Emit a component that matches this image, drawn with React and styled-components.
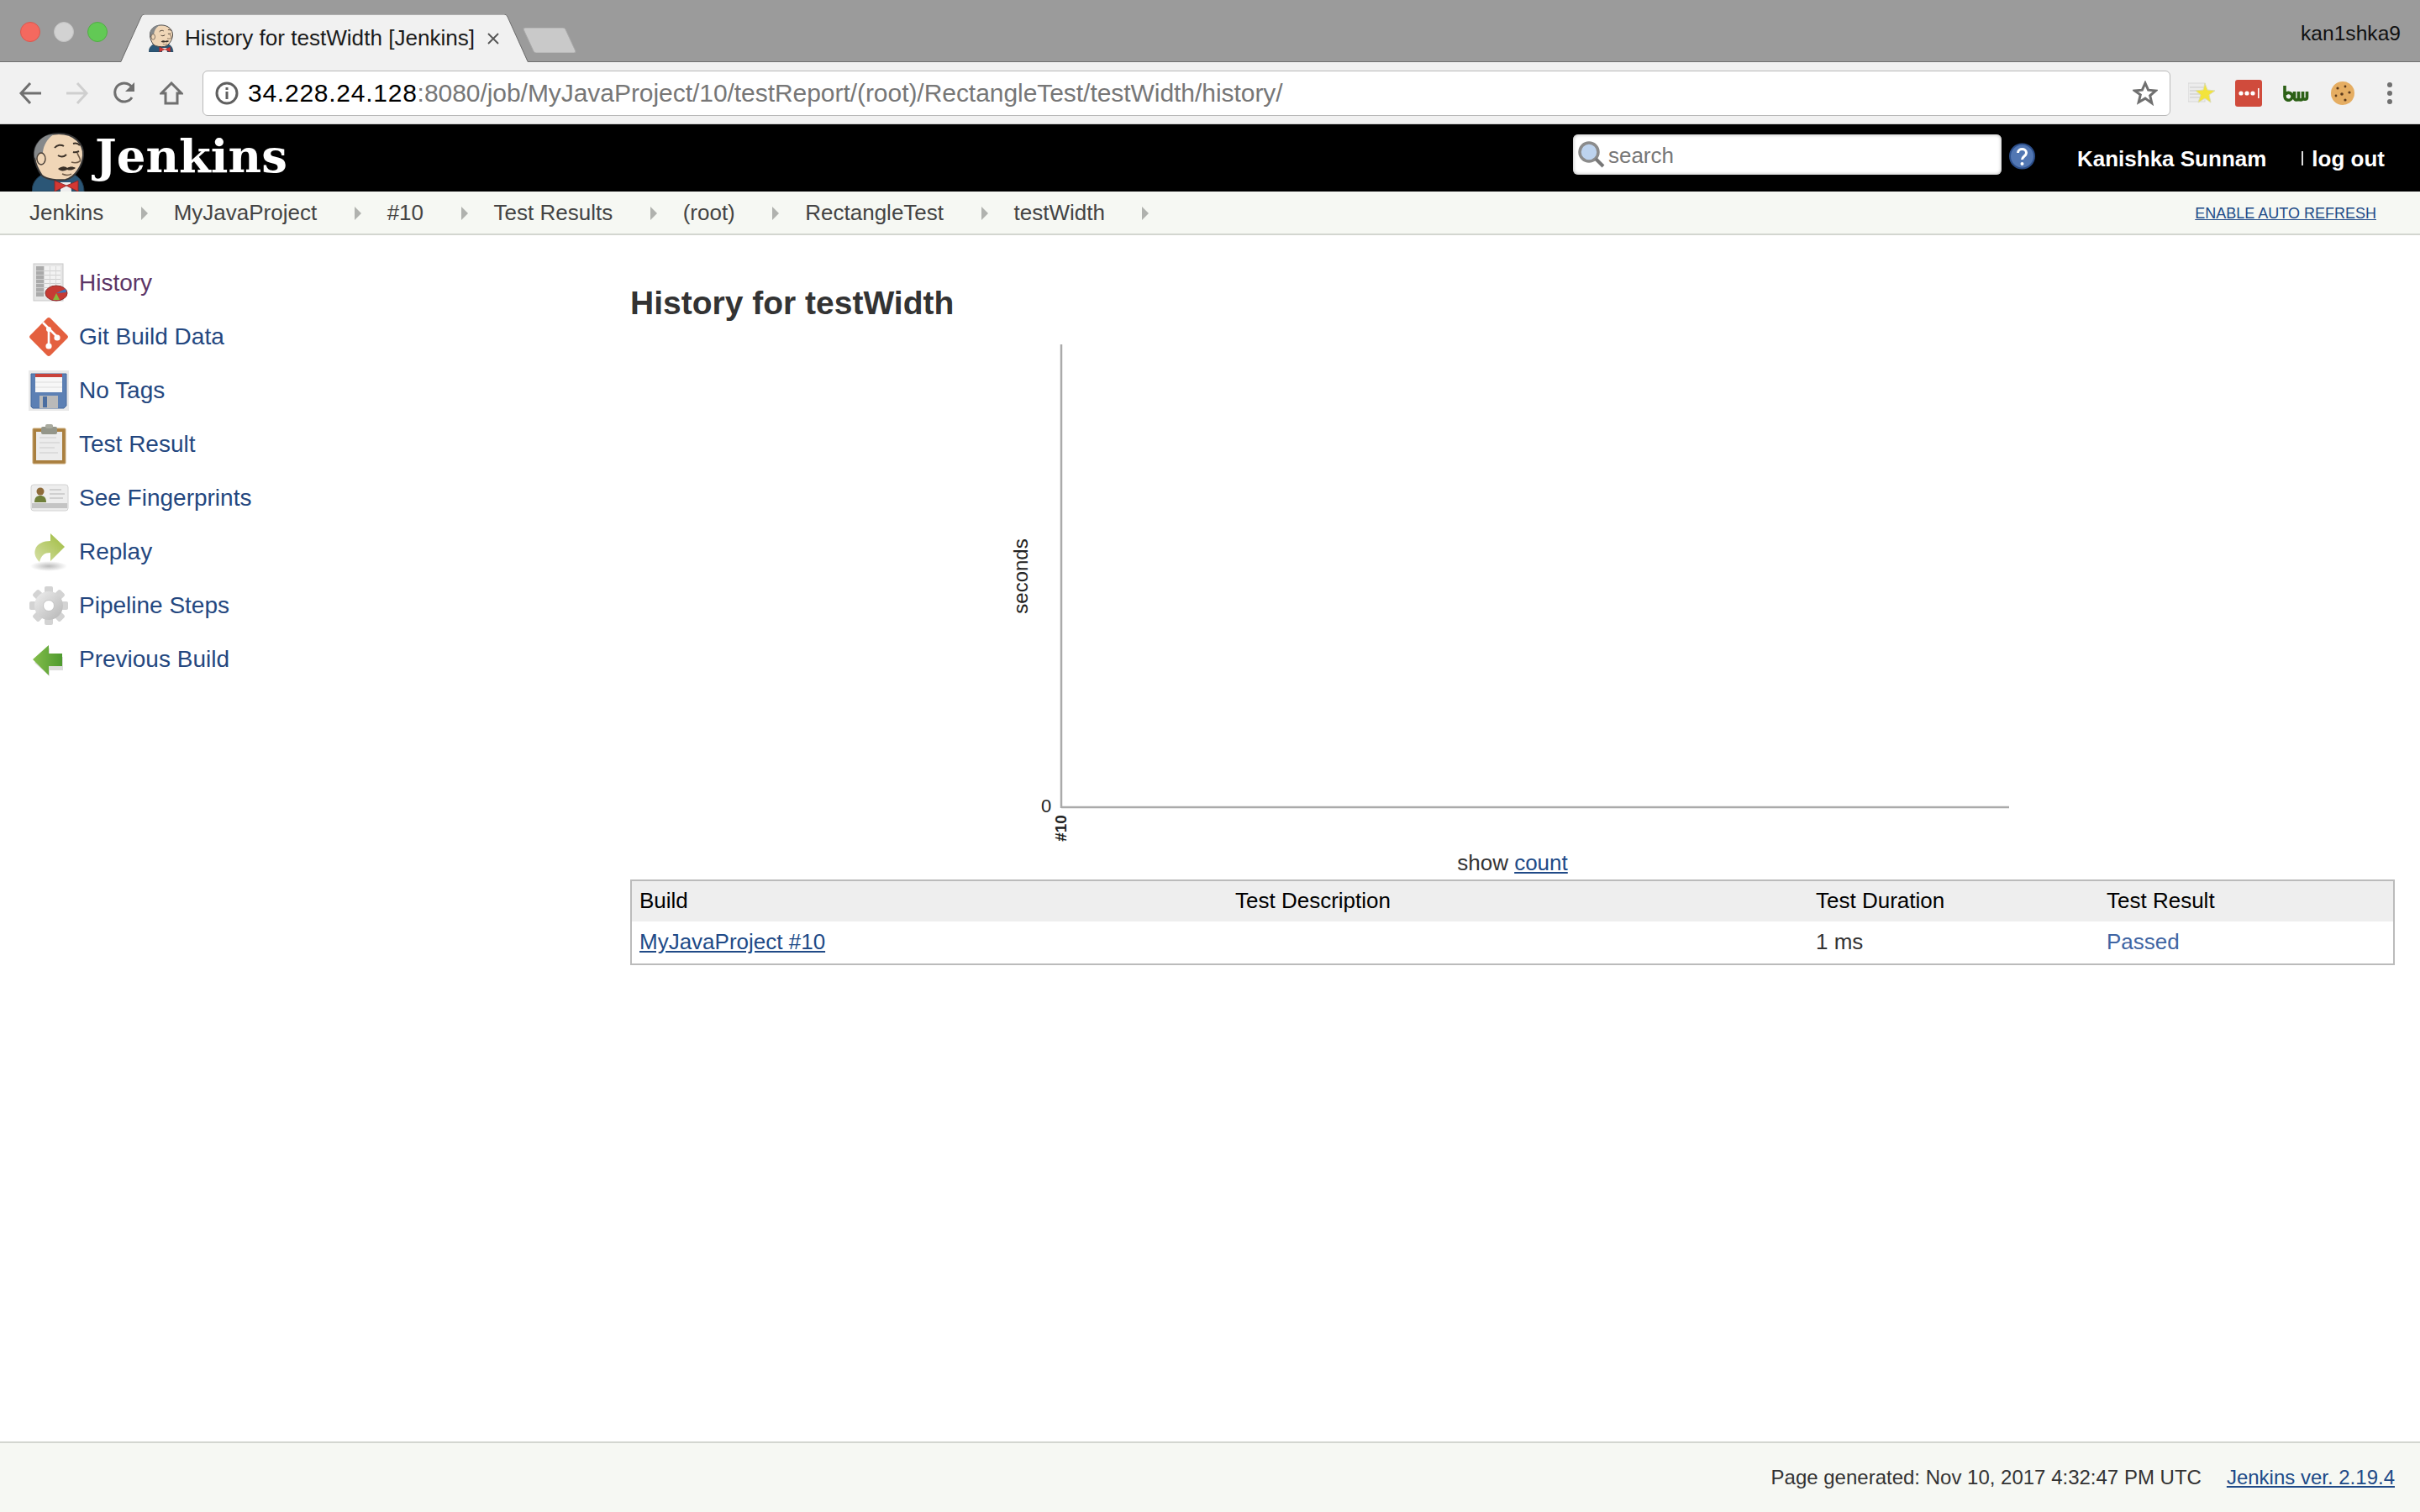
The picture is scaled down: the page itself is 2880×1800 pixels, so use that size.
import styled, { createGlobalStyle } from "styled-components";

const GlobalStyle = createGlobalStyle`
  html, body {
    margin: 0;
    padding: 0;
    background: #fff;
    font-family: "Liberation Sans", Arial, sans-serif;
  }
`;

const Page = styled.div`
  display: flex;
  flex-direction: column;
  min-height: 100vh;
`;

/* browser chrome */
const TabStrip = styled.div`
  display: flex;
  align-items: flex-end;
  height: 73px;
  padding: 0 23px 0 24px;
  background: #9b9b9b;
  border-bottom: 1px solid #6e6e6e;
`;

const Lights = styled.div`
  display: flex;
  gap: 16px;
  align-self: flex-start;
  margin-top: 26px;
  margin-right: 16px;
`;

const Light = styled.span`
  width: 24px;
  height: 24px;
  border-radius: 50%;
  box-sizing: border-box;
  background: ${(p) => p.$color};
  border: 1px solid ${(p) => p.$edge};
`;

const Tab = styled.div`
  position: relative;
  display: flex;
  align-items: center;
  width: 484px;
  height: 57px;
  margin-bottom: -1px;
  padding-left: 33px;
  box-sizing: border-box;
  font-size: 26.1px;
  color: #1a1a1a;
`;

const TabShape = styled.svg`
  position: absolute;
  left: 0;
  top: 0;
`;

const TabFavicon = styled.span`
  position: relative;
  display: flex;
  margin-right: 13px;
`;

const TabTitle = styled.span`
  position: relative;
  white-space: nowrap;
`;

const TabClose = styled.svg`
  position: relative;
  margin-left: 15px;
`;

const NewTab = styled.svg`
  margin: 0 0 10px -6px;
`;

const Profile = styled.span`
  margin-left: auto;
  align-self: flex-start;
  margin-top: 26px;
  font-size: 24.6px;
  line-height: 28px;
  color: #111;
`;

const Toolbar = styled.div`
  display: flex;
  align-items: center;
  height: 73px;
  padding-left: 22px;
  background: #f1f1f1;
  border-bottom: 1px solid #cfcfcf;
`;

const NavIcons = styled.div`
  display: flex;
  gap: 28px;
  margin-right: 23px;
`;

const Omnibox = styled.div`
  flex: 1;
  display: flex;
  align-items: center;
  height: 54px;
  padding: 0 14px;
  box-sizing: border-box;
  background: #fff;
  border: 1px solid #b9b9b9;
  border-radius: 6px;
`;

const Url = styled.span`
  margin-left: 11px;
  font-size: 30px;
  letter-spacing: -0.05px;
  white-space: nowrap;
  color: #777;
  b {
    font-weight: 400;
    letter-spacing: 0.75px;
    color: #000;
  }
`;

const Star = styled.svg`
  margin-left: auto;
`;

const Extensions = styled.div`
  display: flex;
  align-items: center;
  gap: 24px;
  width: 297px;
  padding-left: 21px;
  box-sizing: border-box;
`;

const MenuDots = styled.svg`
  margin-left: 14px;
`;

/* jenkins header */
const Header = styled.header`
  display: flex;
  align-items: center;
  height: 80px;
  padding: 0 42px 0 38px;
  background: #000;
  color: #fff;
`;

const Logo = styled.div`
  display: flex;
  align-self: flex-end;
`;

const Brand = styled.div`
  margin-left: 11px;
  margin-top: -4px;
  font-family: "DejaVu Serif", "Liberation Serif", serif;
  font-weight: 700;
  font-size: 54.5px;
`;

const SearchBox = styled.div`
  display: flex;
  align-items: center;
  width: 510px;
  height: 48px;
  margin-left: auto;
  margin-bottom: 8px;
  padding-left: 5px;
  box-sizing: border-box;
  background: #fff;
  border-radius: 6px;
  box-shadow: inset 0 0 4px #aaa;
  font-size: 26px;
  color: #777;
`;

const SearchLabel = styled.span`
  margin: 2px 0 0 4px;
`;

const Help = styled.svg`
  margin-left: 9px;
  margin-bottom: 4px;
`;

const UserLink = styled.a`
  margin-left: 50px;
  padding-top: 2px;
  font-weight: 700;
  font-size: 26px;
  white-space: nowrap;
`;

const LogOut = styled.a`
  padding-top: 2px;
  font-weight: 700;
  font-size: 26px;
  white-space: nowrap;
`;

const Divider = styled.span`
  width: 2px;
  height: 17px;
  margin-left: 42px;
  margin-right: 10px;
  background: #ddd;
`;

/* breadcrumbs */
const Breadcrumbs = styled.nav`
  display: flex;
  align-items: center;
  height: 50px;
  padding: 0 52px 0 35px;
  background: #f6f8f3;
  border-bottom: 2px solid #d3d6d0;
  font-size: 26px;
  color: #444;
`;

const Crumb = styled.span`
  display: flex;
  align-items: center;
  white-space: nowrap;
  &::after {
    content: "";
    margin: 2px 31px 0 44.5px;
    border-left: 8px solid #b0b2ae;
    border-top: 8px solid transparent;
    border-bottom: 8px solid transparent;
  }
`;

const AutoRefresh = styled.a`
  margin-left: auto;
  padding-top: 2px;
  font-size: 18px;
  color: #204a87;
  text-decoration: underline;
`;

/* page body */
const Content = styled.div`
  flex: 1;
  display: flex;
`;

const Sidebar = styled.aside`
  width: 750px;
  flex: none;
  padding: 25px 0 0 34px;
  box-sizing: border-box;
`;

const Task = styled.a`
  display: flex;
  align-items: center;
  gap: 12px;
  height: 64px;
  font-size: 28px;
  color: ${(p) => (p.$visited ? "#5c3566" : "#24477f")};
`;

const TaskIcon = styled.svg`
  flex: none;
`;

const Main = styled.main`
  flex: 1;
  padding: 61px 30px 0 0;
  min-width: 0;
`;

const Title = styled.h1`
  margin: 0 0 19px;
  font-size: 39px;
  line-height: 40px;
  color: #333;
`;

const Chart = styled.div`
  display: flex;
  justify-content: center;
`;

const ChartText = styled.text`
  font-family: "Liberation Sans", Arial, sans-serif;
  font-size: ${(p) => p.$size}px;
  font-weight: ${(p) => p.$weight || 400};
  fill: #222;
`;

const ShowCount = styled.div`
  height: 30px;
  margin-bottom: 5px;
  font-size: 26px;
  line-height: 30px;
  text-align: center;
  color: #333;
  a {
    color: #204a87;
    text-decoration: underline;
  }
`;

const Table = styled.table`
  width: 100%;
  table-layout: fixed;
  border-collapse: separate;
  border-spacing: 0;
  border: 2px solid #bbb;
  font-size: 26px;
`;

const Th = styled.th`
  width: ${(p) => (p.$w ? `${p.$w}px` : "auto")};
  height: 48px;
  padding: 0 9px 2px;
  box-sizing: border-box;
  background: #eee;
  font-weight: 400;
  text-align: left;
  color: #000;
`;

const Td = styled.td`
  height: 50px;
  padding: 0 9px 2px;
  box-sizing: border-box;
  color: #333;
  a {
    color: #204a87;
    text-decoration: underline;
  }
`;

const Passed = styled.span`
  color: #3f65a3;
`;

const Footer = styled.footer`
  display: flex;
  justify-content: flex-end;
  align-items: center;
  gap: 30px;
  height: 82px;
  padding-right: 30px;
  background: #f6f8f3;
  border-top: 2px solid #d3d6d0;
  font-size: 24px;
  color: #333;
  a {
    color: #204a87;
    text-decoration: underline;
  }
`;

function Butler({ width, height }) {
  return (
    <svg width={width} height={height} viewBox="0 0 64 71">
      <path d="M0 71c0-11 6-18 16-22h30c10 3 16 11 16 22z" fill="#2b5676" stroke="#1d3548" />
      <path d="M34 60h12l1 11H34z" fill="#eee" />
      <path d="M12 52C6 44 4 37 3 30 1 14 14 2 32 2c18 0 30 12 29 26-1 12-9 26-21 29-9 1-22 0-28-5z" fill="#f0d6b7" stroke="#39393a" strokeWidth="2" />
      <path d="M3 30C1 14 14 2 26 3c-8 5-12 13-13 21l-1 10c-4 2-7 0-9-4z" fill="#85888a" />
      <ellipse cx="11" cy="32" rx="5" ry="7" fill="#f0d6b7" stroke="#4a4038" strokeWidth="1.4" />
      <path d="M27 19c3-4 8-4 11-2M49 14c3-1 6 0 8 2" fill="none" stroke="#3a3027" strokeWidth="2" />
      <path d="M31 28c3 2 7 2 10-1M49 24c3 1 5 0 7-1" fill="none" stroke="#3a3027" strokeWidth="2" />
      <path d="M54 25c1 4 5 8 3 10-3 2-7 2-10 1" fill="none" stroke="#6e5a47" strokeWidth="1.6" />
      <path d="M31 44c5-4 9-3 11-1 3-2 7-2 10 0-4 3-7 3-10 2-4 2-8 2-11-1z" fill="#3a3027" />
      <path d="M36 50c4 2 8 2 11 0" fill="none" stroke="#6e5a47" strokeWidth="1.4" />
      <path d="M41 64L27 58v13zM41 64l14-6v13z" fill="#d33833" stroke="#8f201d" strokeWidth="0.8" />
    </svg>
  );
}

function HistoryIcon() {
  return (
    <TaskIcon width="48" height="48" viewBox="0 0 48 48">
      <rect x="6" y="1" width="35" height="44" fill="#e6e6e6" stroke="#c9c9c9" />
      <rect x="9" y="4" width="9" height="36" fill="#aaa" />
      <rect x="18" y="4" width="20" height="36" fill="#f2f2f2" />
      {[9, 14, 19, 24, 29, 34].map((y) => (
        <rect key={y} x="9" y={y} width="29" height="1" fill="#cfcfcf" />
      ))}
      {[18, 25, 32].map((x) => (
        <rect key={x} x={x} y="4" width="1" height="36" fill="#d8d8d8" />
      ))}
      <ellipse cx="33" cy="36" rx="13" ry="9" fill="#c63a34" stroke="#8d2a27" />
      <path d="M33 36l-4 8h8z" fill="#8bb63c" />
      <path d="M33 36l12-1-1-4z" fill="#3a78bd" />
    </TaskIcon>
  );
}

function GitIcon() {
  return (
    <TaskIcon width="48" height="48" viewBox="0 0 48 48">
      <rect x="7" y="7" width="34" height="34" rx="3" fill="#e4603f" transform="rotate(45 24 24)" />
      <path d="M17 7l16 16M24 15v21" stroke="#fff" strokeWidth="2.6" fill="none" />
      <circle cx="24" cy="35" r="3.6" fill="#fff" />
      <circle cx="34" cy="25" r="3.6" fill="#fff" />
      <circle cx="24" cy="15" r="3" fill="#fff" />
    </TaskIcon>
  );
}

function FloppyIcon() {
  return (
    <TaskIcon width="48" height="48" viewBox="0 0 48 48">
      <rect width="48" height="48" fill="#e9e9e9" />
      <path d="M3 4h42v38l-3 3H5l-2-2z" fill="#5c80b4" stroke="#466a9e" />
      <rect x="8" y="4" width="32" height="22" fill="#f7f7f7" />
      <rect x="8" y="4" width="32" height="4" fill="#c9423a" />
      <path d="M8 14h32M8 20h32" stroke="#ddd" />
      <rect x="13" y="30" width="22" height="15" fill="#b9b9b9" />
      <rect x="17" y="31" width="5" height="13" fill="#4a6da0" />
    </TaskIcon>
  );
}

function ClipboardIcon() {
  return (
    <TaskIcon width="48" height="48" viewBox="0 0 48 48">
      <rect x="5" y="5" width="39" height="42" rx="1" fill="#a97f3f" stroke="#c8a877" />
      <rect x="9" y="9" width="31" height="34" fill="#ececec" />
      <path d="M13 16h20M13 22h24M13 28h18M13 34h22" stroke="#dcdcdc" strokeWidth="2" />
      <rect x="15" y="3" width="19" height="9" rx="2" fill="#94968a" />
      <rect x="20" y="0" width="9" height="5" rx="2" fill="#a9ab9f" />
    </TaskIcon>
  );
}

function CardIcon() {
  return (
    <TaskIcon width="48" height="48" viewBox="0 0 48 48">
      <rect x="3" y="8" width="44" height="31" rx="3" fill="#ededed" stroke="#d2d2d2" />
      <rect x="4" y="30" width="42" height="6" fill="#c4c4c4" />
      <circle cx="14" cy="16" r="4.5" fill="#8e6b3a" />
      <path d="M7 29c0-6 3-8 7-8s7 2 7 8z" fill="#6f7f3a" />
      <path d="M25 14h14M25 19h18M25 24h16" stroke="#c6c6c6" strokeWidth="1.6" />
    </TaskIcon>
  );
}

function ReplayIcon() {
  return (
    <TaskIcon width="48" height="48" viewBox="0 0 48 48">
      <defs>
        <linearGradient id="replay" x1="0" x2="1" y1="1" y2="0">
          <stop offset="0" stopColor="#d6dfa6" />
          <stop offset="1" stopColor="#9dbb3c" />
        </linearGradient>
        <radialGradient id="floor">
          <stop offset="0" stopColor="#bbb" />
          <stop offset="1" stopColor="#fff" />
        </radialGradient>
      </defs>
      <ellipse cx="24" cy="41" rx="22" ry="6" fill="url(#floor)" />
      <path d="M26 2l17 16-17 17V25c-7 0-11 3-13 11-4-4-7-9-5-15 2-7 10-10 18-10z" fill="url(#replay)" />
    </TaskIcon>
  );
}

function GearIcon() {
  const teeth = [0, 45, 90, 135, 180, 225, 270, 315];
  return (
    <TaskIcon width="48" height="48" viewBox="0 0 48 48">
      <defs>
        <linearGradient id="gear" x1="0" x2="1" y1="0" y2="1">
          <stop offset="0" stopColor="#efefef" />
          <stop offset="1" stopColor="#b5b5b5" />
        </linearGradient>
      </defs>
      {teeth.map((a) => (
        <rect key={a} x="19" y="1" width="10" height="12" rx="2" fill="#d3d3d3" transform={`rotate(${a} 24 24)`} />
      ))}
      <circle cx="24" cy="24" r="17" fill="url(#gear)" />
      <circle cx="24" cy="24" r="6.5" fill="#fff" stroke="#c4c4c4" />
    </TaskIcon>
  );
}

function PrevIcon() {
  return (
    <TaskIcon width="48" height="48" viewBox="0 0 48 48">
      <defs>
        <linearGradient id="prev" x1="0" x2="1" y1="0" y2="0">
          <stop offset="0" stopColor="#84bd4c" />
          <stop offset="1" stopColor="#4e9a2e" />
        </linearGradient>
      </defs>
      <path d="M6 26l18-18v11h16v16H24v7z" fill="#ddd" transform="translate(1 2)" />
      <path d="M5 24L24 7v10h16v15H24v11z" fill="url(#prev)" />
    </TaskIcon>
  );
}

const tasks = [
  { label: "History", icon: HistoryIcon, visited: true },
  { label: "Git Build Data", icon: GitIcon },
  { label: "No Tags", icon: FloppyIcon },
  { label: "Test Result", icon: ClipboardIcon },
  { label: "See Fingerprints", icon: CardIcon },
  { label: "Replay", icon: ReplayIcon },
  { label: "Pipeline Steps", icon: GearIcon },
  { label: "Previous Build", icon: PrevIcon },
];

const crumbs = ["Jenkins", "MyJavaProject", "#10", "Test Results", "(root)", "RectangleTest", "testWidth"];

function BrowserChrome() {
  return (
    <>
      <TabStrip>
        <Lights>
          <Light $color="#f4695f" $edge="#d9584f" />
          <Light $color="#d2d2d2" $edge="#c2c2c2" />
          <Light $color="#62c955" $edge="#52ad46" />
        </Lights>
        <Tab>
          <TabShape width="484" height="57" viewBox="0 0 484 57">
            <path d="M0 57L24 3q1-3 4-3h428q3 0 4 3l24 54z" fill="#f1f1f1" />
            <path d="M0 56L24 3q1-3 4-3h428q3 0 4 3l24 53" fill="none" stroke="#6e6e6e" />
          </TabShape>
          <TabFavicon>
            <Butler width="30" height="33" />
          </TabFavicon>
          <TabTitle>History for testWidth [Jenkins]</TabTitle>
          <TabClose width="14" height="14" viewBox="0 0 14 14">
            <path d="M1 1l12 12M13 1L1 13" stroke="#555" strokeWidth="1.8" />
          </TabClose>
        </Tab>
        <NewTab width="64" height="30" viewBox="0 0 64 30">
          <path d="M3 0h45q2 0 3 2l12 26q0 2-2 2H16q-2 0-3-2L1 2q0-2 2-2z" fill="#c9c9c9" stroke="#a9a9a9" />
        </NewTab>
        <Profile>kan1shka9</Profile>
      </TabStrip>
      <Toolbar>
        <NavIcons>
          <svg width="28" height="28" viewBox="0 0 28 28">
            <path d="M27 14H4M14 2L3 14l11 12" fill="none" stroke="#6f6f6f" strokeWidth="3" />
          </svg>
          <svg width="28" height="28" viewBox="0 0 28 28">
            <path d="M1 14h23M14 2l11 12-11 12" fill="none" stroke="#cfcfcf" strokeWidth="3" />
          </svg>
          <svg width="28" height="28" viewBox="0 0 28 28">
            <path d="M23 19a11 11 0 1 1 1-10" fill="none" stroke="#6f6f6f" strokeWidth="3" />
            <path d="M26 1v11H15z" fill="#6f6f6f" />
          </svg>
          <svg width="28" height="28" viewBox="0 0 28 28">
            <path d="M14 2L2 14h5v12h14V14h5z" fill="none" stroke="#6f6f6f" strokeWidth="3" />
          </svg>
        </NavIcons>
        <Omnibox>
          <svg width="28" height="28" viewBox="0 0 28 28">
            <circle cx="14" cy="14" r="12" fill="none" stroke="#5f5f5f" strokeWidth="3" />
            <rect x="12.5" y="12" width="3" height="9" fill="#5f5f5f" />
            <rect x="12.5" y="7" width="3" height="3" fill="#5f5f5f" />
          </svg>
          <Url>
            <b>34.228.24.128</b>:8080/job/MyJavaProject/10/testReport/(root)/RectangleTest/testWidth/history/
          </Url>
          <Star width="30" height="30" viewBox="0 0 30 30">
            <path d="M15 3l3.6 8.2 8.9.8-6.8 5.9 2.100 8.800L15 21.100 7.200 25.700l2.100-8.800L2.500 12l8.900-.8z" fill="none" stroke="#707070" strokeWidth="3" />
          </Star>
        </Omnibox>
        <Extensions>
          <svg width="32" height="28" viewBox="0 0 32 28">
            <rect x="0" y="2" width="20" height="22" fill="#ececec" stroke="#d8d8d8" />
            <path d="M2 7h16M2 11h12M2 15h12M2 19h14" stroke="#c9c9c9" />
            <path d="M20 2l3 8 9 1-7 5 2 9-7-5-8 5 3-9-6-5 9-1z" fill="#f3e43c" stroke="#dcdcb0" />
          </svg>
          <svg width="32" height="32" viewBox="0 0 32 32">
            <rect width="32" height="32" rx="3" fill="#d04b3c" />
            <circle cx="7" cy="16" r="2.6" fill="#fff" />
            <circle cx="14" cy="16" r="2.6" fill="#fff" />
            <circle cx="21" cy="16" r="2.6" fill="#fff" />
            <rect x="27" y="10" width="1.6" height="12" fill="#fff" />
          </svg>
          <svg width="33" height="20" viewBox="0 0 32 20">
            <path d="M2.500 1v13a4.500 4.500 0 1 0 1-3M14 8v7c0 4 5 4 5 0V8m0 7c0 4 5 4 5 0V8m0 7c0 3 5 3 5 0V8" fill="none" stroke="#2c6016" strokeWidth="3.6" />
          </svg>
          <svg width="30" height="30" viewBox="0 0 30 30">
            <circle cx="15" cy="15" r="14" fill="#e5ad62" />
            <circle cx="9" cy="9" r="1.6" fill="#5b3a1c" />
            <circle cx="18" cy="7" r="1.4" fill="#5b3a1c" />
            <circle cx="23" cy="14" r="1.6" fill="#5b3a1c" />
            <circle cx="14" cy="16" r="1.8" fill="#5b3a1c" />
            <circle cx="7" cy="18" r="1.4" fill="#5b3a1c" />
            <circle cx="18" cy="23" r="1.6" fill="#5b3a1c" />
          </svg>
          <MenuDots width="6" height="26" viewBox="0 0 6 26">
            <circle cx="3" cy="3" r="3" fill="#707070" />
            <circle cx="3" cy="13" r="3" fill="#707070" />
            <circle cx="3" cy="23" r="3" fill="#707070" />
          </MenuDots>
        </Extensions>
      </Toolbar>
    </>
  );
}

function HistoryChart() {
  return (
    <Chart>
      <svg width="1200" height="612" viewBox="0 0 1200 612">
        <path d="M63 10v552M63 561h1128" fill="none" stroke="#aaa" strokeWidth="2.5" />
        <ChartText $size={24} transform="translate(23 286) rotate(-90)" textAnchor="middle">
          seconds
        </ChartText>
        <ChartText $size={22} x="45" y="567" textAnchor="middle">
          0
        </ChartText>
        <ChartText $size={19} $weight={700} transform="translate(69 586) rotate(-90)" textAnchor="middle">
          #10
        </ChartText>
      </svg>
    </Chart>
  );
}

function App() {
  return (
    <Page>
      <GlobalStyle />
      <BrowserChrome />
      <Header>
        <Logo>
          <Butler width="64" height="71" />
        </Logo>
        <Brand>Jenkins</Brand>
        <SearchBox>
          <svg width="33" height="32" viewBox="0 0 33 32">
            <circle cx="14" cy="13" r="11" fill="#bdd3ee" stroke="#8b8b8b" strokeWidth="3.5" />
            <path d="M22 21l9 9" stroke="#777" strokeWidth="4" />
          </svg>
          <SearchLabel>search</SearchLabel>
        </SearchBox>
        <Help width="31" height="32" viewBox="0 0 31 32">
          <circle cx="15.5" cy="16" r="14.5" fill="#5277b3" stroke="#2c4f8b" strokeWidth="2" />
          <path d="M10.5 12c0-6 10-6 10 0 0 4-5 4-5 8" fill="none" stroke="#fff" strokeWidth="3" />
          <circle cx="15.5" cy="25" r="2" fill="#fff" />
        </Help>
        <UserLink>Kanishka Sunnam</UserLink>
        <Divider />
        <LogOut>log out</LogOut>
      </Header>
      <Breadcrumbs>
        {crumbs.map((c) => (
          <Crumb key={c}>{c}</Crumb>
        ))}
        <AutoRefresh>ENABLE AUTO REFRESH</AutoRefresh>
      </Breadcrumbs>
      <Content>
        <Sidebar>
          {tasks.map((t) => (
            <Task key={t.label} $visited={t.visited}>
              <t.icon />
              {t.label}
            </Task>
          ))}
        </Sidebar>
        <Main>
          <Title>History for testWidth</Title>
          <HistoryChart />
          <ShowCount>
            show <a>count</a>
          </ShowCount>
          <Table>
            <thead>
              <tr>
                <Th $w={709}>Build</Th>
                <Th $w={691}>Test Description</Th>
                <Th $w={346}>Test Duration</Th>
                <Th>Test Result</Th>
              </tr>
            </thead>
            <tbody>
              <tr>
                <Td>
                  <a>MyJavaProject #10</a>
                </Td>
                <Td />
                <Td>1 ms</Td>
                <Td>
                  <Passed>Passed</Passed>
                </Td>
              </tr>
            </tbody>
          </Table>
        </Main>
      </Content>
      <Footer>
        <span>Page generated: Nov 10, 2017 4:32:47 PM UTC</span>
        <a>Jenkins ver. 2.19.4</a>
      </Footer>
    </Page>
  );
}

export default App;
